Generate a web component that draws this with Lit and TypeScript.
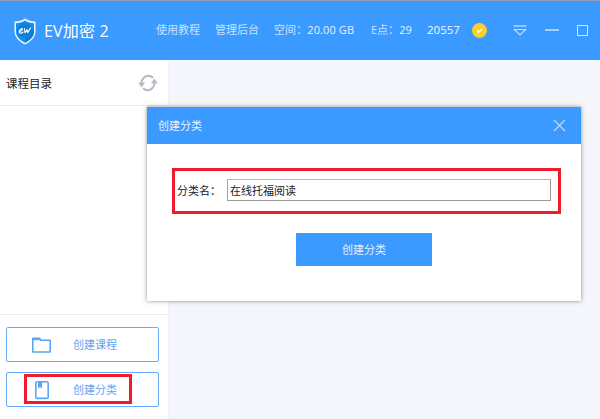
import { LitElement, html, css } from "lit";
import { customElement } from "lit/decorators.js";

@customElement("app-root")
export class AppRoot extends LitElement {
  static styles = css`
    :host {
      display: block;
      width: 600px;
      height: 419px;
      position: relative;
      overflow: hidden;
      background: #f5f6fb;
      font-family: "Open Sans", "Noto Sans CJK SC", sans-serif;
      font-size: 12px;
    }
    .topline { height: 1px; background: #8f9bb5; }
    .header {
      height: 59px;
      background: #3a9aff;
      display: flex;
      align-items: center;
      color: #d6e8ff;
      box-sizing: border-box;
      padding-left: 14px;
    }
    .logo { width: 22px; height: 27px; display: block; margin-right: 8px; margin-top: 1px; }
    .brand { font-size: 16px; color: #fff; width: 112px; white-space: nowrap; letter-spacing: 0.2px; margin-top: -2px; }
    .nav { display: flex; align-items: center; margin-top: -3px; white-space: nowrap; }
    .n1, .n2 { width: 59px; color: #c9e1ff; font-size: 11px; }
    .n3 { width: 97px; color: #e6f1ff; font-size: 11px; letter-spacing: 0.1px; }
    .n3 b, .n4 b { font-weight: 400; color: #c9e1ff; }
    .n4 { width: 56px; color: #e6f1ff; font-size: 11px; }
    .n5 { width: 45px; color: #f0f6ff; font-size: 11.5px; }
    .win { display: flex; align-items: center; margin-top: -1px; }
    .coin { width: 15px; height: 15px; display: block; margin-right: 26px; }
    .tri { width: 14px; height: 11px; display: block; margin-right: 18px; }
    .minus { width: 14px; height: 2px; background: #a9d0fb; margin-right: 18px; }
    .max { width: 9px; height: 9px; border: 1px solid #d3e6fd; }

    .main { display: flex; height: 359px; }
    .side {
      width: 169px;
      background: #fff;
      border-right: 1px solid #f0f1f6;
      box-sizing: border-box;
      display: flex;
      flex-direction: column;
    }
    .shead {
      height: 46px;
      border-bottom: 1px solid #ecedf2;
      display: flex;
      align-items: center;
      justify-content: space-between;
      padding: 0 10px 0 6px;
      box-sizing: border-box;
      color: #222;
      font-size: 11.5px;
    }
    .sync { width: 20px; height: 20px; display: block; }
    .list { flex: 1; border-bottom: 1px solid #ecedf2; }
    .actions { padding: 12px 9px 12px 6px; display: flex; flex-direction: column; gap: 10px; height: 104px; box-sizing: border-box; }
    .act {
      height: 35px;
      border: 1px solid #66acfb;
      border-radius: 2px;
      display: flex;
      align-items: center;
      color: #5fa4f5;
      font-size: 11px;
      box-sizing: border-box;
    }
    .act span { margin-top: -2px; }
    .act svg { display: block; width: 24px; height: 20px; margin-left: 23px; margin-right: 19px; }

    .modal {
      position: absolute;
      left: 147px;
      top: 107px;
      width: 434px;
      height: 194px;
      background: #fff;
      box-shadow: 0 0 4px rgba(60, 60, 60, 0.6);
      display: flex;
      flex-direction: column;
    }
    .mhead {
      height: 37px;
      background: #3a9aff;
      color: #e8f2ff;
      font-size: 11px;
      display: flex;
      align-items: center;
      justify-content: space-between;
      padding: 0 15px 0 11px;
    }
    .mhead span { margin-top: -2px; }
    .x { width: 13px; height: 13px; display: block; }
    .field { display: flex; align-items: center; margin: 35px 30px 0 30px; height: 22px; color: #222; font-size: 11px; }
    .field label { width: 50px; white-space: nowrap; }
    .input {
      flex: 1;
      height: 22px;
      box-sizing: border-box;
      border: 1px solid;
      border-color: #b5b5b5 #9a9a9a #9a9a9a #a5a5a5;
      padding: 0 2px;
      font: 11px "Open Sans", "Noto Sans CJK SC", sans-serif;
      color: #222;
      background: #fff;
      outline: none;
      min-width: 0;
    }
    .submit {
      align-self: flex-start;
      margin: 32px 0 0 149px;
      width: 136px;
      height: 33px;
      box-sizing: border-box;
      padding-bottom: 2px;
      background: #3a9aff;
      border-radius: 1px;
      color: #e4f0ff;
      font-size: 11px;
      display: flex;
      align-items: center;
      justify-content: center;
    }
    .mark { position: absolute; border: 3px solid #ee1c2c; box-sizing: border-box; pointer-events: none; }
    .m1 { left: 172px; top: 168px; width: 389px; height: 46px; }
    .m2 { left: 24px; top: 374px; width: 108px; height: 30px; }
  `;

  render() {
    return html`
      <div class="topline"></div>
      <div class="header">
        <svg class="logo" viewBox="0 0 22 27">
          <path d="M11 0.5 C14 2.6 17.5 3.4 21.5 3.6 L21.5 13.5 C21.5 19.5 16.5 24 11 26.5 C5.5 24 0.5 19.5 0.5 13.5 L0.5 3.6 C4.5 3.4 8 2.6 11 0.5Z" fill="#e8f4ff"/>
          <path d="M11 2.4 C13.8 4.2 16.8 5 20 5.2 L20 13.5 C20 18.7 15.6 22.5 11 24.7 C6.4 22.5 2 18.7 2 13.5 L2 5.2 C5.2 5 8.2 4.2 11 2.4Z" fill="#1b8eea"/>
          <path d="M11 24.7 C15.6 22.5 20 18.7 20 13.5 L20 11 L11 15Z" fill="#0b74cf" opacity=".75"/>
          <circle cx="11" cy="12.5" r="7.6" fill="#0f7fdc"/>
          <path d="M5.6 13.4 C7.4 12.9 8.8 11.8 8.3 10.9 C7.8 10 5.4 11.4 5.2 13.6 C5.1 15.4 7.2 15.6 9 14.2 M10.4 10.6 L11 14.8 L13 11.6 L13.8 14.6 L16.6 9.8" fill="none" stroke="#fff" stroke-width="1.1" stroke-linecap="round" stroke-linejoin="round"/>
        </svg>
        <div class="brand">EV加密 2</div>
        <div class="nav">
          <span class="n1">使用教程</span>
          <span class="n2">管理后台</span>
          <span class="n3"><b>空间：</b>20.00 GB</span>
          <span class="n4"><b>E点：</b>29</span>
          <span class="n5">20557</span>
        </div>
        <div class="win">
          <svg class="coin" viewBox="0 0 15 15">
            <circle cx="7.5" cy="7.5" r="7.5" fill="#fbcf2c"/>
            <path d="M4.6 6.4 L6.2 11 L11.6 4.8 L6.9 7.8Z" fill="#fff"/>
          </svg>
          <svg class="tri" viewBox="0 0 14 11">
            <path d="M0.5 1 H13.5" stroke="#bcdcff" stroke-width="1.4" fill="none"/>
            <path d="M1.5 4.5 H12.5 L7 10 Z" stroke="#bcdcff" stroke-width="1.2" fill="none"/>
          </svg>
          <div class="minus"></div>
          <div class="max"></div>
        </div>
      </div>
      <div class="main">
        <div class="side">
          <div class="shead">
            <span>课程目录</span>
            <svg class="sync" viewBox="0 0 20 20" fill="none" stroke="#b4b8c8" stroke-width="2">
              <path d="M3.5 10 C3.8 5.5 7 2.8 10.5 2.8 C12.5 2.8 13.8 3.6 15 4.8"/>
              <path d="M16.5 10 C16.2 14.5 13 17.2 9.5 17.2 C7.5 17.2 6.2 16.4 5 15.2"/>
              <path d="M0.2 9.5 H7 L3.6 14.5 Z" fill="#b4b8c8" stroke="none"/>
              <path d="M13 10.5 H19.8 L16.4 5.5 Z" fill="#b4b8c8" stroke="none"/>
            </svg>
          </div>
          <div class="list"></div>
          <div class="actions">
            <div class="act">
              <svg viewBox="0 0 24 20" fill="none" stroke="#5aa5f8" stroke-width="1.6">
                <path d="M2.8 5.6 V3.2 H9.5 L10.8 5.2 H20.2 V17 H3 Q2.8 17 2.8 16.5 Z" stroke-linejoin="round"/>
                <path d="M2.8 3.4 H9.5 V5.2 H2.8Z" fill="#5aa5f8" stroke="none"/>
              </svg>
              <span>创建课程</span>
            </div>
            <div class="act">
              <svg viewBox="0 0 24 20" fill="none" stroke="#5aa5f8" stroke-width="1.6">
                <rect x="5.8" y="1.8" width="12.4" height="16.6" rx="1.5"/>
                <path d="M8 2 H12 V8.5 L10 7 L8 8.5Z" fill="#5aa5f8" stroke="none"/>
              </svg>
              <span>创建分类</span>
            </div>
          </div>
        </div>
      </div>
      <div class="modal">
        <div class="mhead">
          <span>创建分类</span>
          <svg class="x" viewBox="0 0 13 13" stroke="#bcdcff" stroke-width="1.1" fill="none">
            <path d="M1 1 L12 12 M12 1 L1 12"/>
          </svg>
        </div>
        <div class="field">
          <label>分类名：</label>
          <input class="input" .value=${"在线托福阅读"} />
        </div>
        <div class="submit">创建分类</div>
      </div>
      <div class="mark m1"></div>
      <div class="mark m2"></div>
    `;
  }
}
